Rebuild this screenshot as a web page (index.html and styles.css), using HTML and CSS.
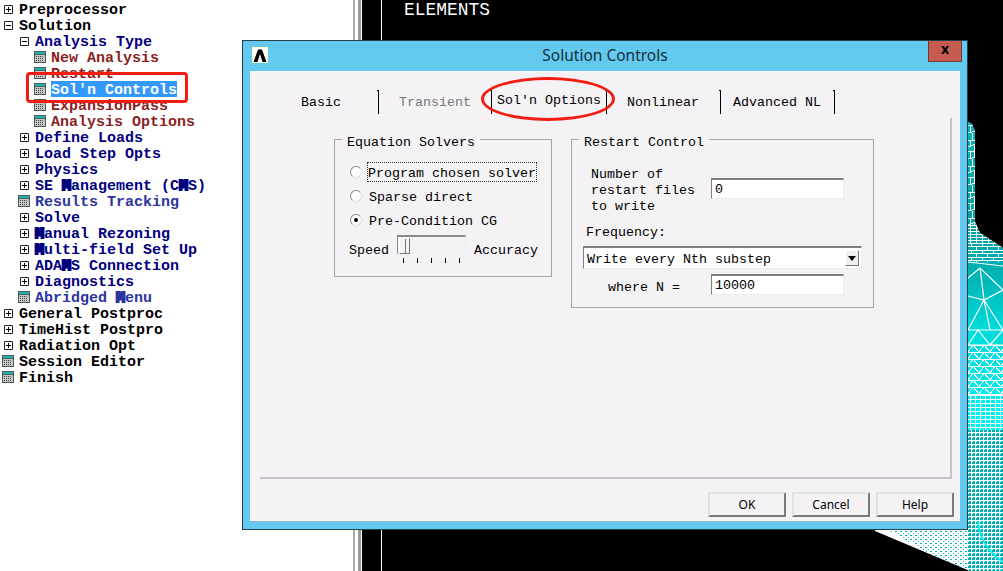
FILE: index.html
```html
<!DOCTYPE html>
<html lang="en">
<head>
<meta charset="utf-8">
<title>Solution Controls</title>
<link rel="stylesheet" href="styles.css">
</head>
<body>
<svg class="sprite" aria-hidden="true">
  <symbol id="plus" viewBox="0 0 9 9"><path d="M.5.5h8v8h-8z" fill="#fff" stroke="#222"/><path d="M2 4.5h5M4.5 2v5" stroke="#000"/></symbol>
  <symbol id="minus" viewBox="0 0 9 9"><path d="M.5.5h8v8h-8z" fill="#fff" stroke="#222"/><path d="M2 4.5h5" stroke="#000"/></symbol>
  <symbol id="cal" viewBox="0 0 12 12"><path d="M0 0h12v12H0z" fill="#4a5a5a"/><path d="M1 1h10v2H1z" fill="#1fb5b0"/><path d="M1 4h10v7H1z" fill="#c8c8c8"/><path d="M2 5.500h8M2 7.500h8M2 9.500h8" stroke="#444" stroke-dasharray="1 1"/></symbol>
</svg>
<main class="desktop">
  <nav class="tree">
    <div class="row l0 black"><span class="slot"><svg class="ic9"><use href="#plus"/></svg></span><span class="label">Preprocessor</span></div>
    <div class="row l0 black"><span class="slot"><svg class="ic9"><use href="#minus"/></svg></span><span class="label">Solution</span></div>
    <div class="row l1 navy"><span class="slot"><svg class="ic9"><use href="#minus"/></svg></span><span class="label">Analysis Type</span></div>
    <div class="row l2 red"><span class="slot"><svg class="ic12"><use href="#cal"/></svg></span><span class="label">New Analysis</span></div>
    <div class="row l2 red"><span class="slot"><svg class="ic12"><use href="#cal"/></svg></span><span class="label">Restart</span></div>
    <div class="row l2"><span class="slot"><svg class="ic12"><use href="#cal"/></svg></span><span class="label selected">Sol'n Controls</span></div>
    <div class="row l2 red"><span class="slot"><svg class="ic12"><use href="#cal"/></svg></span><span class="label">ExpansionPass</span></div>
    <div class="row l2 red"><span class="slot"><svg class="ic12"><use href="#cal"/></svg></span><span class="label">Analysis Options</span></div>
    <div class="row l1 navy"><span class="slot"><svg class="ic9"><use href="#plus"/></svg></span><span class="label">Define Loads</span></div>
    <div class="row l1 navy"><span class="slot"><svg class="ic9"><use href="#plus"/></svg></span><span class="label">Load Step Opts</span></div>
    <div class="row l1 navy"><span class="slot"><svg class="ic9"><use href="#plus"/></svg></span><span class="label">Physics</span></div>
    <div class="row l1 navy"><span class="slot"><svg class="ic9"><use href="#plus"/></svg></span><span class="label">SE <b class="blob">M</b>anagement (C<b class="blob">M</b>S)</span></div>
    <div class="row l1 blue"><span class="slot"><svg class="ic12"><use href="#cal"/></svg></span><span class="label">Results Tracking</span></div>
    <div class="row l1 navy"><span class="slot"><svg class="ic9"><use href="#plus"/></svg></span><span class="label">Solve</span></div>
    <div class="row l1 navy"><span class="slot"><svg class="ic9"><use href="#plus"/></svg></span><span class="label"><b class="blob">M</b>anual Rezoning</span></div>
    <div class="row l1 navy"><span class="slot"><svg class="ic9"><use href="#plus"/></svg></span><span class="label"><b class="blob">M</b>ulti-field Set Up</span></div>
    <div class="row l1 navy"><span class="slot"><svg class="ic9"><use href="#plus"/></svg></span><span class="label">ADA<b class="blob">M</b>S Connection</span></div>
    <div class="row l1 navy"><span class="slot"><svg class="ic9"><use href="#plus"/></svg></span><span class="label">Diagnostics</span></div>
    <div class="row l1 blue"><span class="slot"><svg class="ic12"><use href="#cal"/></svg></span><span class="label">Abridged <b class="blob">M</b>enu</span></div>
    <div class="row l0 black"><span class="slot"><svg class="ic9"><use href="#plus"/></svg></span><span class="label">General Postproc</span></div>
    <div class="row l0 black"><span class="slot"><svg class="ic9"><use href="#plus"/></svg></span><span class="label">TimeHist Postpro</span></div>
    <div class="row l0 black"><span class="slot"><svg class="ic9"><use href="#plus"/></svg></span><span class="label">Radiation Opt</span></div>
    <div class="row l0 black"><span class="slot"><svg class="ic12"><use href="#cal"/></svg></span><span class="label">Session Editor</span></div>
    <div class="row l0 black"><span class="slot"><svg class="ic12"><use href="#cal"/></svg></span><span class="label">Finish</span></div>
    <div class="mark-box"></div>
  </nav>
  <div class="splitter"></div>
  <section class="canvas">
    <div class="gutter"></div>
    <div class="canvas-title">ELEMENTS</div>
    <svg class="mesh" viewBox="362 0 641 571" shape-rendering="crispEdges" aria-hidden="true">
      <defs>
        <linearGradient id="shade" x1="0" y1="122" x2="0" y2="430" gradientUnits="userSpaceOnUse">
          <stop offset="0" stop-color="#00b8b8"/>
          <stop offset=".35" stop-color="#00a0a0"/>
          <stop offset=".5" stop-color="#00b4b4"/>
          <stop offset=".68" stop-color="#00dcdc"/>
          <stop offset="1" stop-color="#00f4f4"/>
        </linearGradient>
        <pattern id="tall" x="968" y="122" width="8" height="26" patternUnits="userSpaceOnUse">
          <path d="M0 3h8M0 11L8 9M2 3v8M6 0v9M0 18h8M0 25L8 22M4 11v7M2 18v7M6 22v4" stroke="#fff" fill="none"/>
        </pattern>
        <pattern id="brickA" x="968" y="225" width="6" height="3" patternUnits="userSpaceOnUse">
          <path d="M0 .5h6M2 0v3" stroke="#fff" fill="none"/>
        </pattern>
        <pattern id="brickB" x="968" y="243" width="11" height="7" patternUnits="userSpaceOnUse">
          <path d="M0 .5h11M0 4L11 3M3 0v4M8 3v4" stroke="#fff" fill="none"/>
        </pattern>
        <pattern id="tri" x="968" y="345" width="11" height="7" patternUnits="userSpaceOnUse">
          <path d="M0 .5h11M0 7L5 0L11 7" stroke="#fff" fill="none"/>
        </pattern>
        <pattern id="fine" x="968" y="395" width="5" height="4" patternUnits="userSpaceOnUse">
          <path d="M0 0h5v1H0zM2 1h1v3H2z" fill="#fff"/>
        </pattern>
        <pattern id="dense" x="968" y="430" width="4" height="4" patternUnits="userSpaceOnUse">
          <path d="M0 0h3v2H0z" fill="#00b0b0"/><path d="M1 3h2v1H1z" fill="#00c8c8"/>
        </pattern>
        <pattern id="sparse" x="880" y="531" width="5" height="4" patternUnits="userSpaceOnUse">
          <path d="M0 0h2v1H0z" fill="#00b0b0"/><path d="M3 2h1v1H3z" fill="#00c0c0"/>
        </pattern>
        <clipPath id="shape"><path d="M968 122L972 124L975 132V222L980 233L1003 248V571H970L875 531V122z"/></clipPath>
      </defs>
      <g clip-path="url(#shape)">
        <path d="M875 122H1003V571H875z" fill="#fff"/>
        <path d="M968 122H1003V430H968z" fill="url(#shade)"/>
        <path d="M968 122h10v103h-10z" fill="url(#tall)"/>
        <path d="M968 225h35v18h-35z" fill="url(#brickA)"/>
        <path d="M968 243h35v19h-35z" fill="url(#brickB)"/>
        <path d="M968 262L1003 266M968 278L980 268L1003 290M980 268L984 300M968 296L984 300L1003 290M984 300L968 330M984 300L1003 330M968 330H1003M984 300L990 330M968 345L978 330L990 345L1003 330M968 345H1003" stroke="#fff" stroke-width="1.200" fill="none" shape-rendering="auto"/>
        <path d="M968 345h35v50h-35z" fill="url(#tri)"/>
        <path d="M968 395h35v35h-35z" fill="url(#fine)"/>
        <path d="M968 430h35v141h-35z" fill="#fff"/>
        <path d="M968 430h35v141h-35z" fill="url(#dense)"/>
        <path d="M890 531H968V571H960z" fill="url(#sparse)"/>
        <path d="M978 522C980 540 988 552 1003 562" stroke="#00f0f0" stroke-width="2" fill="none" shape-rendering="auto"/>
      </g>
    </svg>
  </section>
  <div class="mark-oval"></div>
  <article class="dialog">
    <header class="titlebar">
      <svg class="logo" viewBox="0 0 16 16" aria-hidden="true"><path d="M0 0h16v16H0z" fill="#fff6c8"/><path d="M1 1h14v14H1z" fill="#fff"/><path d="M1.500 15L6 2.500h4L14.500 15h-4L8 7l-2.500 8z" fill="#000"/></svg>
      <h1 class="title">Solution Controls</h1>
      <button class="close">x</button>
    </header>
    <div class="client">
      <div class="tabs">
        <div class="tab t-basic">Basic</div>
        <div class="tab t-trans">Transient</div>
        <div class="tab t-sol">Sol'n Options</div>
        <div class="tab t-non">Nonlinear</div>
        <div class="tab t-adv">Advanced NL</div>
      </div>
      <div class="sheet">
        <fieldset class="group solvers">
          <legend>Equation Solvers</legend>
          <div class="radio"><span class="dot"></span><span class="focus-label">Program chosen solver</span></div>
          <div class="radio"><span class="dot"></span><span class="plain-label">Sparse direct</span></div>
          <div class="radio"><span class="dot on"></span><span class="plain-label">Pre-Condition CG</span></div>
          <div class="speed">
            <span class="speed-text">Speed</span>
            <div class="slider">
              <div class="track"><span class="thumb"></span></div>
              <div class="ticks"><i></i><i></i><i></i><i></i><i></i></div>
            </div>
            <span class="speed-text">Accuracy</span>
          </div>
        </fieldset>
        <fieldset class="group restart">
          <legend>Restart Control</legend>
          <div class="num-row">
            <div class="num-label">Number of<br>restart files<br>to write</div>
            <div class="field">0</div>
          </div>
          <div class="freq">Frequency:</div>
          <div class="select"><span class="select-text">Write every Nth substep</span><span class="drop"><svg width="8" height="5" viewBox="0 0 8 5"><path d="M0 0h8L4 5z" fill="#000"/></svg></span></div>
          <div class="where-row"><span class="where">where N =</span><div class="field">10000</div></div>
        </fieldset>
      </div>
      <footer class="buttons">
        <button class="btn">OK</button>
        <button class="btn">Cancel</button>
        <button class="btn">Help</button>
      </footer>
    </div>
  </article>
</main>
</body>
</html>
```
FILE: styles.css
```css
* { box-sizing: border-box; }
html, body { margin: 0; height: 100%; overflow: hidden; background: #fff; }
.sprite { display: none; }
.desktop { position: relative; display: flex; width: 1003px; height: 571px; overflow: hidden; }

.tree { position: relative; width: 353px; padding-top: 1px; font: bold 15px/16px "Liberation Mono", monospace; }
.row { display: flex; align-items: center; height: 16px; white-space: pre; }
.slot { display: flex; justify-content: center; align-items: center; width: 16px; margin-right: 3px; }
.label { height: 16px; line-height: 19px; }
.l1 { padding-left: 16px; }
.l2 { padding-left: 32px; }
.ic9 { width: 9px; height: 9px; }
.ic12 { width: 12px; height: 12px; }
.black { color: #000; }
.navy { color: #00007f; }
.blue { color: #2a35a0; }
.red { color: #8c1f1f; }
.selected { background: #3399ff; color: #fff; }
.blob { -webkit-text-stroke: 2.2px currentColor; }
.mark-box { position: absolute; left: 26px; top: 72px; width: 162px; height: 31px; border: 3px solid #f41c10; border-radius: 4px; }

.splitter { width: 9px; background: #fff; border-left: 2px solid #aaa; border-right: 1px solid #fff; box-shadow: inset -3px 0 0 #999; }
.canvas { position: relative; flex: 1; display: flex; background: #000; }
.gutter { width: 20px; height: 100%; border-right: 1px solid #fff; }
.canvas-title { margin: 2px 0 0 22px; color: #fff; font: 17.9px/17px "Liberation Mono", monospace; }
.mesh { position: absolute; left: 0; top: 0; width: 641px; height: 571px; }

.dialog { position: absolute; left: 242px; top: 40px; width: 726px; height: 490px; display: flex; flex-direction: column; background: #63c9ef; border: 1px solid #28404a; padding: 0 7px 7px; }
.titlebar { display: flex; align-items: flex-start; height: 30px; flex: none; position: relative; }
.logo { position: absolute; left: 2px; top: 6px; width: 16px; height: 16px; }
.title { flex: 1; margin: 0; text-align: center; font: 400 15.5px/28px "Noto Sans", sans-serif; color: #17303c; }
.close { position: absolute; right: -2px; top: 0; width: 34px; height: 21px; padding: 0 0 4px; background: #c75b52; border: 1px solid #6e3b37; border-top: 0; color: #000; font: bold 14px/14px "Noto Sans", sans-serif; }
.client { flex: 1; display: flex; flex-direction: column; background: #f5f2f6; border-bottom: 1px solid #8fb8ca; }

.tabs { display: flex; height: 24px; margin-top: 19px; padding-left: 51px; font: 13.34px/26px "Liberation Mono", monospace; color: #000; }
.tab { position: relative; height: 24px; border-right: 1px solid #000; white-space: nowrap; }
.tab::after { content: ""; position: absolute; right: -1px; top: 0; width: 2px; height: 1px; background: #000; }
.t-basic { width: 78px; }
.t-trans { width: 113px; padding-left: 20px; color: #777; }
.t-sol { width: 115px; padding-left: 5px; line-height: 22px; }
.t-non { width: 114px; padding-left: 20px; }
.t-adv { width: 114px; padding-left: 12px; }

.sheet { display: flex; align-items: flex-start; gap: 19px; width: 692px; height: 361px; margin: 4px 0 0 10px; padding: 13px 0 0 74px; border-right: 2px solid #c6c2c8; border-bottom: 2px solid #c6c2c8; font: 13.34px/16px "Liberation Mono", monospace; color: #000; }
.group { margin: 0; padding: 0; border: 1px solid #a4a4a4; min-width: 0; }
.group legend { height: 16px; margin-left: 7px; padding: 0 5px; line-height: 24px; }
.solvers { width: 218px; height: 146px; padding-top: 16px; }
.radio { display: flex; align-items: center; height: 18px; margin-bottom: 6px; padding-left: 15px; }
.dot { flex: none; width: 12px; height: 12px; border-radius: 50%; background: #fff; border: 1px solid #888; border-right-color: #ddd; border-bottom-color: #ddd; display: flex; align-items: center; justify-content: center; }
.dot.on::after { content: ""; width: 4px; height: 4px; border-radius: 50%; background: #000; }
.focus-label { margin-left: 6px; height: 18px; line-height: 21px; outline: 1px dotted #333; }
.plain-label { margin-left: 7px; height: 18px; line-height: 21px; }
.speed { display: flex; align-items: flex-start; gap: 8px; padding-left: 14px; margin-top: -2px; line-height: 24px; }
.speed-text { margin-top: 6px; }
.slider { width: 69px; }
.track { display: flex; height: 19px; margin-top: 2px; padding: 1px 0 0 1px; border: 1px solid #eee; border-top: 2px solid #8a8a8a; border-left: 1px solid #8a8a8a; background: #f5f2f6; }
.thumb { width: 11px; height: 16px; border: 1px solid #777; border-top-color: #fff; border-left-color: #fff; box-shadow: inset -3px 0 0 #f5f2f6, inset -4px 0 0 #777; }
.ticks { display: flex; gap: 13px; padding: 4px 0 0 6px; }
.ticks i { width: 1px; height: 5px; background: #000; }

.restart { width: 303px; height: 177px; }
.num-row { display: flex; align-items: flex-start; margin-top: 19px; padding-left: 19px; }
.num-label { width: 120px; padding-top: 1px; }
.field { width: 133px; height: 21px; margin-top: 12px; padding-left: 3px; background: #fff; border: 1px solid #ececec; border-top: 2px solid #808080; border-left: 1px solid #808080; line-height: 19px; }
.freq { margin: 10px 0 5px 14px; }
.select { display: flex; justify-content: space-between; align-items: center; width: 279px; height: 23px; margin-left: 11px; padding: 0 2px 0 3px; background: #fff; border: 1px solid #ececec; border-top: 2px solid #808080; border-left: 1px solid #808080; }
.select-text { height: 18px; line-height: 21px; }
.drop { display: flex; align-items: center; justify-content: center; width: 14px; height: 16px; background: #f0eef0; border: 1px solid #777; border-top-color: #fff; border-left-color: #fff; }
.where-row { display: flex; align-items: flex-start; padding-left: 11px; }
.where { width: 128px; padding: 11px 0 0 25px; }
.where-row .field { margin-top: 5px; }

.buttons { display: flex; justify-content: flex-end; gap: 6px; margin-top: 13px; padding-right: 6px; }
.btn { width: 78px; height: 25px; padding: 0; background: #f5f2f6; border: 2px solid; border-color: #e4e2e4 #7c7a7c #7c7a7c #e4e2e4; color: #000; font: 12px/20px "Noto Sans", sans-serif; }

.mark-oval { position: absolute; left: 481px; top: 77px; width: 134px; height: 44px; border: 3px solid #f41c10; border-radius: 50%; z-index: 2; }
```
